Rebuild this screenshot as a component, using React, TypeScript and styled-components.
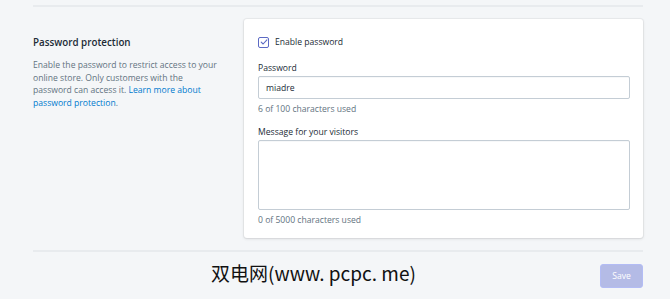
import React, { useState } from "react";
import styled, { createGlobalStyle } from "styled-components";

const GlobalStyle = createGlobalStyle`
  html, body {
    margin: 0;
    padding: 0;
    background: #f4f6f8;
    font-family: "Open Sans", "Noto Sans", sans-serif;
    color: #212b36;
  }
`;

const Page = styled.div`
  width: 670px;
  height: 299px;
  padding: 5px 27px 0 33px;
  box-sizing: border-box;
  position: relative;
  overflow: hidden;
`;

const Divider = styled.div<{ $gap: number }>`
  height: 2px;
  background: #e8ebee;
  margin-bottom: ${(p) => p.$gap}px;
`;

const Section = styled.div`
  display: grid;
  grid-template-columns: 211px 1fr;
  margin-bottom: 12px;
`;

const Info = styled.div`
  padding-top: 17px;
  padding-right: 22px;
`;

const Title = styled.h2`
  margin: 0 0 9px;
  font-size: 9.8px;
  font-weight: 600;
  line-height: 14px;
  color: #212b36;
`;

const Desc = styled.p`
  margin: 0;
  font-size: 8.6px;
  line-height: 12.7px;
  color: #637381;
`;

const Link = styled.a`
  color: #007ace;
  text-decoration: none;
`;

const Card = styled.div`
  background: #fff;
  border-radius: 3px;
  box-shadow: 0 0 0 1px rgba(63, 63, 68, 0.05), 0 1px 3px 0 rgba(63, 63, 68, 0.15);
  padding: 17px 13px 14px 14px;
  height: 219px;
  box-sizing: border-box;
`;

const CheckRow = styled.label`
  display: flex;
  align-items: center;
  gap: 6px;
  font-size: 8.6px;
  line-height: 12px;
  color: #212b36;
  margin-bottom: 14px;
`;

const Box = styled.span`
  width: 9px;
  height: 9px;
  border: 1px solid #5c6ac4;
  border-radius: 2px;
  display: flex;
  align-items: center;
  justify-content: center;
  background: #fff;
`;

const Field = styled.div`
  display: flex;
  flex-direction: column;
`;

const Label = styled.div`
  font-size: 8.6px;
  line-height: 12px;
  color: #212b36;
  margin-bottom: 2px;
`;

const Input = styled.div`
  height: 23px;
  border: 1px solid #c4cdd5;
  border-radius: 2px;
  box-sizing: border-box;
  padding: 0 7px;
  display: flex;
  align-items: center;
  font-size: 8.6px;
  color: #212b36;
  box-shadow: inset 0 1px 0 0 rgba(99, 115, 129, 0.05);
`;

const TextArea = styled(Input)`
  height: 70px;
`;

const Help = styled.div`
  font-size: 8.6px;
  line-height: 12px;
  color: #637381;
  margin-top: 4px;
  margin-bottom: 11px;
`;

const Footer = styled.div`
  display: flex;
  justify-content: flex-end;
`;

const SaveButton = styled.button`
  width: 43px;
  height: 24px;
  border: 1px solid #b3bcf5;
  border-radius: 3px;
  background: #b4bbe6;
  color: #fff;
  font-family: "Open Sans", "Noto Sans", sans-serif;
  font-size: 8.6px;
  padding: 0;
`;

const Watermark = styled.div`
  position: absolute;
  left: 211px;
  top: 261px;
  font-family: "Noto Sans CJK SC", "Noto Sans", sans-serif;
  font-size: 19px;
  line-height: 24px;
  color: #111;
`;

export default function App() {
  const [enabled] = useState(true);

  return (
    <>
      <GlobalStyle />
      <Page>
        <Divider $gap={12} />
        <Section>
          <Info>
            <Title>Password protection</Title>
            <Desc>
              Enable the password to restrict access to your online store. Only
              customers with the password can access it.{" "}
              <Link href="#">Learn more about password protection</Link>.
            </Desc>
          </Info>
          <Card>
            <CheckRow>
              <Box>
                {enabled ? (
                  <svg width="8" height="8" viewBox="0 0 8 8">
                    <path
                      d="M1.2 4.2 L3.1 6 L6.9 1.8"
                      fill="none"
                      stroke="#5c6ac4"
                      strokeWidth="1.1"
                      strokeLinecap="round"
                      strokeLinejoin="round"
                    />
                  </svg>
                ) : null}
              </Box>
              Enable password
            </CheckRow>
            <Field>
              <Label>Password</Label>
              <Input>miadre</Input>
              <Help>6 of 100 characters used</Help>
            </Field>
            <Field>
              <Label>Message for your visitors</Label>
              <TextArea />
              <Help>0 of 5000 characters used</Help>
            </Field>
          </Card>
        </Section>
        <Divider $gap={12} />
        <Footer>
          <SaveButton disabled>Save</SaveButton>
        </Footer>
        <Watermark>双电网(www. pcpc. me)</Watermark>
      </Page>
    </>
  );
}
